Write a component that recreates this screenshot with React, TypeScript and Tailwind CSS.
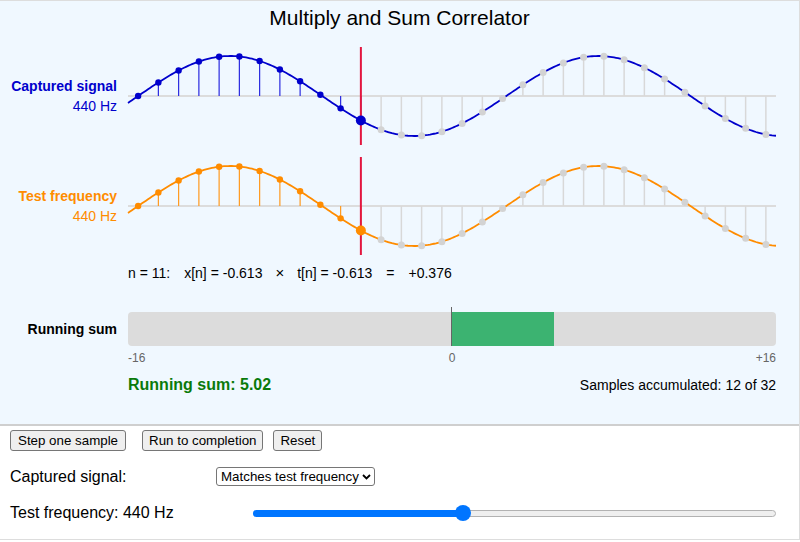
import React from 'react'

const N = 32
const CUR = 11
const FS = 8000
const FREQ = 440
const W = 648
const H = 110
const MID = 55
const AMP = 40
const STEP = W / N

const sampleX = (n: number) => (n + 0.5) * STEP
const value = (t: number) => Math.sin((2 * Math.PI * FREQ * t) / FS)

function curvePath() {
  let d = ''
  for (let px = 0; px <= W; px += 2) {
    const t = px / STEP - 0.5
    const y = MID - AMP * value(t)
    d += (px === 0 ? 'M' : 'L') + px + ' ' + y.toFixed(2) + ' '
  }
  return d
}

interface ChartProps {
  label: string
  color: string
  stem: string
  labelClass: string
}

function SignalChart({ label, color, stem, labelClass }: ChartProps) {
  const cx = sampleX(CUR)
  const d = curvePath()

  return (
    <div className="flex items-center h-[110px]">
      <div className={`w-[117px] text-right text-[14px] leading-[20px] ${labelClass}`}>
        <div className="font-bold">{label}</div>
        <div>440 Hz</div>
      </div>
      <svg width={W} height={H} className="ml-[11px] overflow-visible">
        <line x1={0} y1={MID} x2={W} y2={MID} stroke="#dcdcdc" strokeWidth={2} />
        {/* stems */}
        {Array.from({ length: N }).map((_, n) => {
          const x = sampleX(n)
          const y = MID - AMP * value(n)
          const past = n <= CUR
          return (
            <line
              key={'s' + n}
              x1={x}
              y1={MID}
              x2={x}
              y2={y}
              stroke={past ? stem : '#d8d8d8'}
              strokeWidth={past ? 1.2 : 1.5}
            />
          )
        })}
        <line x1={cx} y1={6} x2={cx} y2={104} stroke="#e3163f" strokeWidth={2} />
        <path d={d} fill="none" stroke={color} strokeWidth={1.8} />
        {/* dots */}
        {Array.from({ length: N }).map((_, n) => {
          const x = sampleX(n)
          const y = MID - AMP * value(n)
          if (n === CUR) return <circle key={'d' + n} cx={x} cy={y} r={5} fill={color} />
          if (n < CUR) return <circle key={'d' + n} cx={x} cy={y} r={3.2} fill={color} />
          return <circle key={'d' + n} cx={x} cy={y} r={3.5} fill="#d3d3d3" />
        })}
      </svg>
    </div>
  )
}

export default function App() {
  const xn = value(CUR)
  const product = xn * xn
  let sum = 0
  for (let n = 0; n <= CUR; n++) sum += value(n) * value(n)
  const fillPct = (sum / 16) * 50
  const sliderPct = 40.2

  return (
    <div className="w-[800px] h-[542px] bg-white text-black font-['Liberation_Sans',Arial,sans-serif]">
      <div className="w-[800px] h-[540px] border-t border-r border-b border-[#dddddd]">
        {/* Correlator panel */}
        <div className="h-[425px] bg-[#f0f8ff] border-b-2 border-[#cfcfcf]">
          <h1 className="pt-[5px] mb-[11px] text-[21px] leading-[24px] text-center">
            Multiply and Sum Correlator
          </h1>

          <SignalChart label="Captured signal" color="#0000cc" stem="#2a2ae0" labelClass="text-[#0000cc]" />
          <SignalChart label="Test frequency" color="#ff8c00" stem="#ff9a1f" labelClass="text-[#ff8c00]" />

          <div className="ml-[128px] h-[24px] flex items-center text-[14px]">
            <span>n = {CUR}:</span>
            <span className="ml-[14px]">x[n] = {xn.toFixed(3)}</span>
            <span className="ml-[13px] text-[15px]">×</span>
            <span className="ml-[13px]">t[n] = {xn.toFixed(3)}</span>
            <span className="ml-[14px]">=</span>
            <span className="ml-[14px]">+{product.toFixed(3)}</span>
          </div>

          <div className="mt-[27px] flex items-center h-[34px]">
            <div className="w-[117px] text-right text-[14px] font-bold">Running sum</div>
            <div className="ml-[11px] w-[648px] h-[34px] relative bg-[#dcdcdc] rounded-[4px]">
              <div
                className="absolute top-0 bottom-0 left-1/2 bg-[#3cb371]"
                style={{ width: `${fillPct}%` }}
              />
              <div className="absolute left-1/2 -top-[5px] bottom-0 w-px -ml-px bg-[#666666]" />
            </div>
          </div>

          <div className="ml-[128px] w-[648px] mt-[4px] grid grid-cols-3 text-[12px] leading-[16px] text-[#666666]">
            <span className="text-left">-16</span>
            <span className="text-center">0</span>
            <span className="text-right">+16</span>
          </div>

          <div className="ml-[128px] w-[648px] mt-[9px] h-[20px] flex items-center justify-between">
            <span className="text-[16px] font-bold text-[#0a7a0a]">Running sum: {sum.toFixed(2)}</span>
            <span className="text-[14px]">Samples accumulated: {CUR + 1} of {N}</span>
          </div>
        </div>

        {/* Controls */}
        <div className="pl-[10px] pt-[4px]">
          <div className="flex items-center text-[13.33px]">
            <button className="h-[21px] px-[7px] bg-[#efefef] border border-[#767676] rounded-[3px] leading-none">
              Step one sample
            </button>
            <button className="ml-[16px] h-[21px] px-[6px] bg-[#efefef] border border-[#767676] rounded-[3px] leading-none">
              Run to completion
            </button>
            <button className="ml-[10px] h-[21px] px-[6px] bg-[#efefef] border border-[#767676] rounded-[3px] leading-none">
              Reset
            </button>
          </div>

          <div className="mt-[16px] flex items-center h-[19px]">
            <span className="w-[206px] text-[16px]">Captured signal:</span>
            <div className="w-[159px] h-[19px] border border-[#767676] rounded-[3px] bg-white flex items-center justify-between pl-[4px] pr-[3px] text-[13.33px]">
              <span>Matches test frequency</span>
              <svg width="9" height="6" viewBox="0 0 9 6">
                <path d="M1 1 L4.5 4.5 L8 1" fill="none" stroke="#000" strokeWidth={1.8} />
              </svg>
            </div>
          </div>

          <div className="mt-[17px] flex items-center h-[20px]">
            <span className="w-[243px] text-[16px]">Test frequency: 440 Hz</span>
            <div className="w-[523px] h-[16px] relative flex items-center">
              <div className="h-[7px] bg-[#0075ff] rounded-l-full" style={{ width: `${sliderPct}%` }} />
              <div className="h-[7px] flex-1 bg-[#efefef] border border-[#b2b2b2] rounded-r-full" />
              <div
                className="absolute top-0 w-[16px] h-[16px] -ml-[8px] rounded-full bg-[#0075ff]"
                style={{ left: `${sliderPct}%` }}
              />
            </div>
          </div>
        </div>
      </div>
    </div>
  )
}
